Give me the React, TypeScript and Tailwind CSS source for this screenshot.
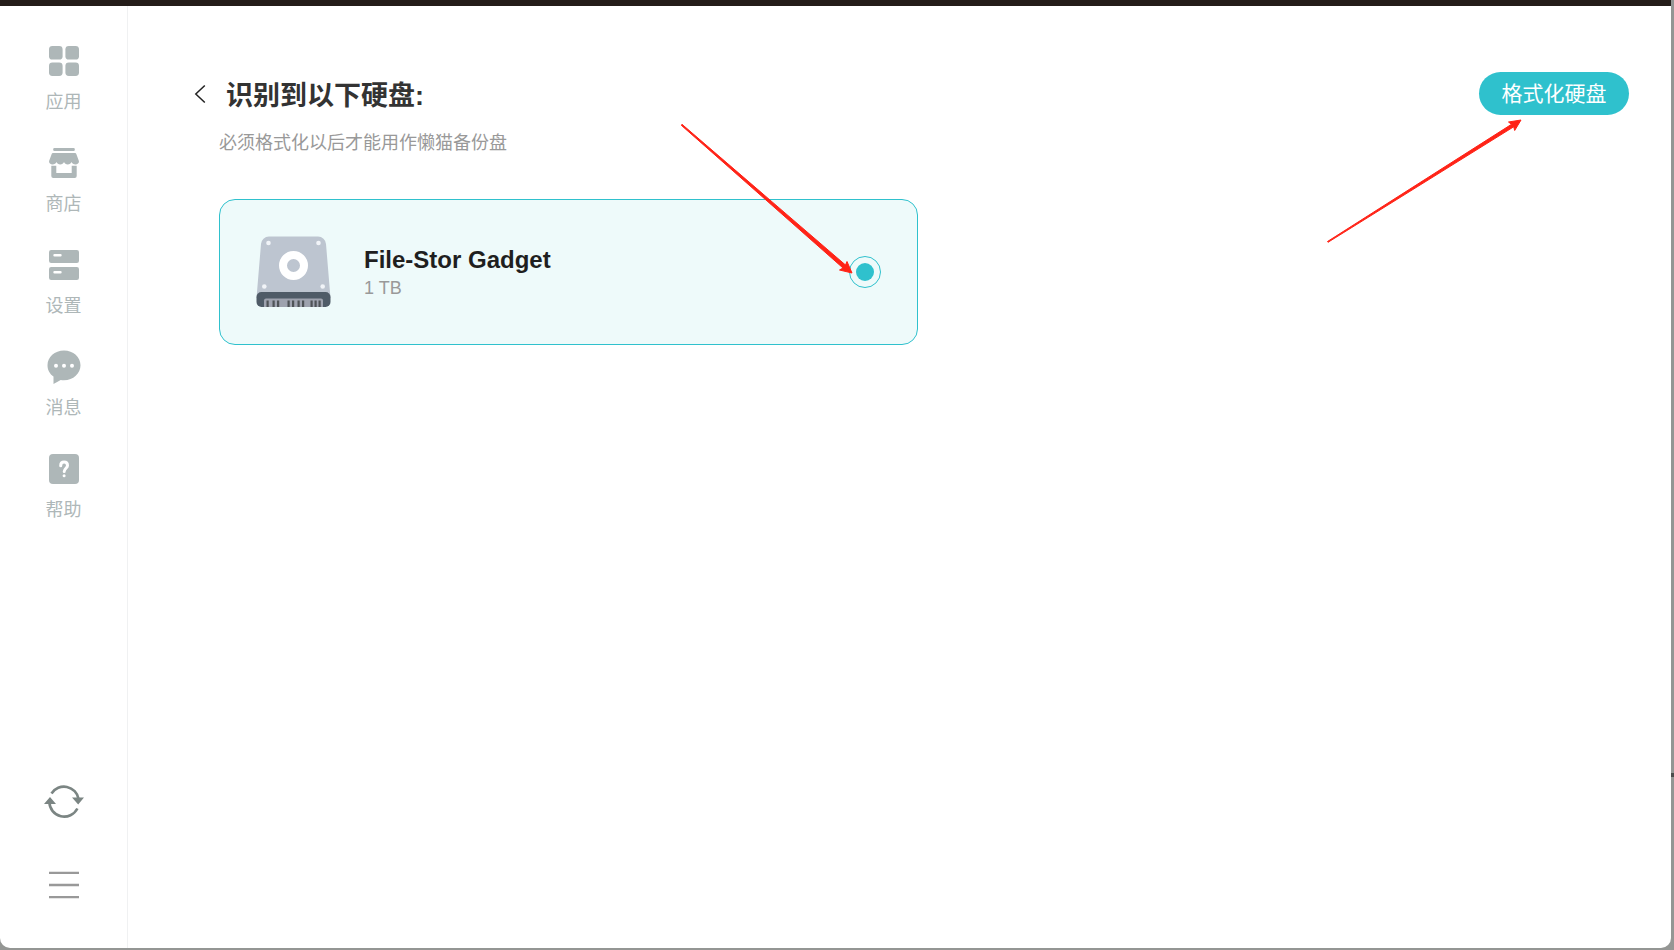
import { useState } from "react";

const AppsIcon = () => (
  <svg viewBox="0 0 30 30" className="size-[30px]" fill="currentColor">
    <rect x="0" y="0" width="13.6" height="13.6" rx="3.4" />
    <rect x="16.4" y="0" width="13.6" height="13.6" rx="3.4" />
    <rect x="0" y="16.4" width="13.6" height="13.6" rx="3.4" />
    <rect x="16.4" y="16.4" width="13.6" height="13.6" rx="3.4" />
  </svg>
);

const StoreIcon = () => (
  <svg viewBox="0 0 30 30" className="size-[30px]" fill="currentColor">
    <rect x="4.2" y="0" width="21.6" height="3" rx="1.2" />
    <path d="M4.5 5h21c1 0 1.7.5 2 1.4L29.9 13c.3 1.8-1.1 3.500-3.400 3.500-2 0-3.400-1-4-2.500-.6 1.500-2 2.500-3.750 2.500s-3.150-1-3.750-2.500c-.6 1.500-2 2.500-3.750 2.500s-3.150-1-3.750-2.500c-.6 1.500-2 2.500-4 2.500C1.200 16.500-.2 14.800.1 13L2.500 6.400C2.800 5.500 3.500 5 4.500 5z" />
    <path d="M2.300 17.700h5V25h15.400v-7.300h5V28a2 2 0 0 1-2 2H4.300a2 2 0 0 1-2-2z" />
  </svg>
);

const SettingsIcon = () => (
  <svg viewBox="0 0 30 30" className="size-[30px]" fill="currentColor">
    <rect x="0" y="0" width="30" height="13" rx="2.2" />
    <rect x="0" y="17" width="30" height="13" rx="2.2" />
    <path d="M5.500 5.300h6M5.500 22.300h6" stroke="#fff" strokeWidth="2.4" strokeLinecap="round" />
  </svg>
);

const MessageIcon = () => (
  <svg viewBox="0 0 34 34" className="size-[34px]" fill="currentColor">
    <path d="M17 .5C7.700.5.500 7 .5 15.200c0 4.700 2.300 8.700 6 11.400v7.400l7.200-4.100c1.100.2 2.100.3 3.300.3 9.300 0 16.500-6.800 16.500-15S26.300.5 17 .5z" />
    <circle cx="9" cy="15.800" r="2" fill="#fff" />
    <circle cx="17" cy="15.800" r="2" fill="#fff" />
    <circle cx="25" cy="15.800" r="2" fill="#fff" />
  </svg>
);

const HelpIcon = () => (
  <svg viewBox="0 0 30 30" className="size-[30px]">
    <rect width="30" height="30" rx="4" fill="currentColor" />
    <path d="M11.700 11.700c0-2.300 1.400-3.600 3.400-3.600s3.400 1.400 3.400 3.300c0 2.700-3.300 3-3.300 6.200" fill="none" stroke="#fff" strokeWidth="3" strokeLinecap="round" />
    <circle cx="15.100" cy="21.700" r="1.500" fill="#fff" />
  </svg>
);

const SyncIcon = () => (
  <svg viewBox="0 0 40 40" className="size-10" fill="none" stroke="currentColor" strokeWidth="2.6">
    <path d="M7.500 11.500A14.800 14.800 0 0 1 34.600 17M33.400 26.500A14.800 14.800 0 0 1 5.400 20" />
    <path d="M28 15.500h12L34.200 22.500zM0 22h12L6 15z" fill="currentColor" stroke="none" />
  </svg>
);

const MenuIcon = () => (
  <svg viewBox="0 0 30 30" className="size-[30px]" stroke="currentColor" strokeWidth="2.3">
    <path d="M0 2.800h30M0 15h30M0 27.200h30" />
  </svg>
);

const pins = [3, 9, 13.5, 24, 28.5, 34, 38.5, 47, 51, 55];

const DiskIcon = () => (
  <svg viewBox="0 0 75 72" className="h-[72px] w-[75px] shrink-0">
    <path d="M13 .5h49a8 8 0 0 1 8 7.500L74.500 62H.5L5 8A8 8 0 0 1 13 .5z" fill="#bdc5d0" />
    <circle cx="12.500" cy="7" r="2.300" fill="#f1f4f8" />
    <circle cx="62.500" cy="7" r="2.300" fill="#f1f4f8" />
    <circle cx="8.300" cy="50.500" r="2.300" fill="#f1f4f8" />
    <circle cx="66.700" cy="50.500" r="2.300" fill="#f1f4f8" />
    <circle cx="37.500" cy="29.500" r="10.500" fill="none" stroke="#fff" strokeWidth="8" />
    <rect x=".5" y="56" width="74" height="15" rx="5" fill="#4f5b67" />
    <path d="M8 71v-6.500a2 2 0 0 1 2-2h55a2 2 0 0 1 2 2V71z" fill="#9ea2ae" />
    {pins.map((x) => (
      <rect key={x} x={x + 7.5} y="64.500" width="2.200" height="6.500" fill="#4f5357" />
    ))}
  </svg>
);

const navItems = [
  { label: "应用", icon: AppsIcon },
  { label: "商店", icon: StoreIcon },
  { label: "设置", icon: SettingsIcon },
  { label: "消息", icon: MessageIcon },
  { label: "帮助", icon: HelpIcon },
];

const Sidebar = () => (
  <aside className="flex w-32 shrink-0 flex-col items-center justify-between border-r border-[#f0f1f2] pt-10 pb-12">
    <nav className="flex flex-col gap-[34px]">
      {navItems.map(({ label, icon: Icon }) => (
        <a key={label} href="#" className="flex flex-col items-center gap-3.5 text-[#aeb7b8]">
          <span className="flex h-[30px] items-center justify-center">
            <Icon />
          </span>
          <span className="text-lg leading-6">{label}</span>
        </a>
      ))}
    </nav>
    <div className="flex flex-col items-center gap-12">
      <button type="button" aria-label="刷新" className="text-[#7b8583]">
        <SyncIcon />
      </button>
      <button type="button" aria-label="菜单" className="text-[#999999]">
        <MenuIcon />
      </button>
    </div>
  </aside>
);

export default function App() {
  const [selected, setSelected] = useState("gadget");

  return (
    <div className="relative flex min-h-screen flex-col bg-[#949694] pr-[3px] pb-[2px] font-['Liberation_Sans','Noto_Sans_CJK_SC',sans-serif]">
      <div className="h-[6px] bg-[#241d19]" />
      <div className="absolute top-[773px] right-0 h-1 w-[3px] bg-[#4b4d4c]" />
      <div className="flex flex-1 rounded-b-[10px] bg-white">
        <Sidebar />
        <main className="flex-1 pt-[66px] pr-[42px] pl-16">
          <header className="flex items-center justify-between">
            <div className="flex items-center gap-[18px]">
              <button type="button" aria-label="返回" className="w-4">
                <svg viewBox="0 0 16 20" className="h-5 w-4" fill="none" stroke="#222" strokeWidth="1.5">
                  <path d="M12.800 1.500L3.800 10l9 8.500" />
                </svg>
              </button>
              <h1 className="pt-1 text-[27px] leading-9 font-bold text-[#333333]">识别到以下硬盘:</h1>
            </div>
            <div className="relative">
              <button type="button" className="h-[43px] w-[150px] rounded-full bg-[#2fc1cd] text-[21px] text-white">
                格式化硬盘
              </button>
              <svg
                viewBox="0 0 196 125"
                className="pointer-events-none absolute top-[46px] right-[106px] h-[125px] w-[196px]"
                fill="#ff2317"
                stroke="#ff2317"
                strokeLinejoin="round"
              >
                <path d="M1 124.300L.5 123.500 184.500 6.300 181.500 4 194 2 187.700 12.500 186.700 8.800z" />
              </svg>
            </div>
          </header>

          <div className="pl-[27px]">
            <p className="mt-4 text-lg leading-6 text-[#999999]">必须格式化以后才能用作懒猫备份盘</p>
            <div className="mt-11 grid grid-cols-2 gap-3">
              <label className="flex items-center gap-[33px] rounded-2xl border border-[#2fc1cd] bg-[#eefafa] px-9 py-9">
                <DiskIcon />
                <span className="flex flex-1 flex-col">
                  <span className="text-2xl leading-8 font-bold text-[#1f1f1f]">File-Stor Gadget</span>
                  <span className="text-lg leading-6 text-[#999999]">1 TB</span>
                </span>
                <span className="relative flex">
                  <input
                    type="radio"
                    name="disk"
                    value="gadget"
                    checked={selected === "gadget"}
                    onChange={(e) => setSelected(e.target.value)}
                    className="size-8 appearance-none rounded-full border border-[#2fc1cd] bg-clip-content p-[6px] checked:bg-[#2fc1cd]"
                  />
                  <svg
                    viewBox="0 0 173 151"
                    className="pointer-events-none absolute right-[27px] bottom-[13px] h-[151px] w-[173px]"
                    fill="#ff2317"
                    stroke="#ff2317"
                    strokeLinejoin="round"
                  >
                    <path d="M.2 1.200L1 .3 164.500 141 166 137.500 171 149 158.500 146 162 144z" />
                  </svg>
                </span>
              </label>
            </div>
          </div>
        </main>
      </div>
    </div>
  );
}
